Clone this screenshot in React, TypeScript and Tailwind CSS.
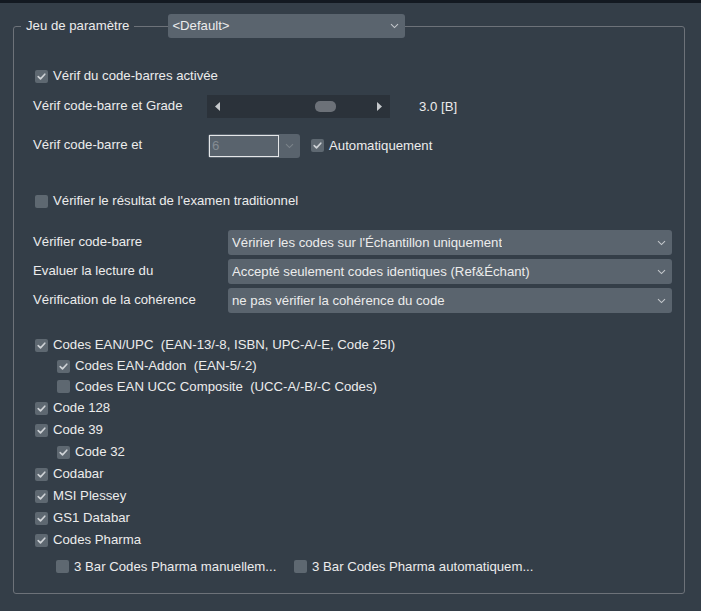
import React from "react";

const font = { fontFamily: '"Liberation Sans", Arial, sans-serif' };

function Check({ checked = false }: { checked?: boolean }) {
  return (
    <span className="flex h-[13px] w-[13px] shrink-0 items-center justify-center rounded-[2px] bg-[#5e6871]">
      {checked && (
        <svg width="9" height="9" viewBox="0 0 9 9" fill="none">
          <path d="M1.2 4.6 L3.5 6.9 L7.8 2.2" stroke="#cfd3d7" strokeWidth="1.6" strokeLinecap="round" strokeLinejoin="round" />
        </svg>
      )}
    </span>
  );
}

function Chevron({ color = "#c3c7cb" }: { color?: string }) {
  return (
    <svg width="9" height="6" viewBox="0 0 9 6" fill="none" className="shrink-0">
      <path d="M1 1.2 L4.5 4.6 L8 1.2" stroke={color} strokeWidth="1.1" />
    </svg>
  );
}

function CheckRow({
  label,
  checked,
  indent = false,
  className = "h-[22px]",
}: {
  label: string;
  checked?: boolean;
  indent?: boolean;
  className?: string;
}) {
  return (
    <div className={`flex items-center gap-[5px] ${indent ? "ml-[24px]" : "ml-[2px]"} ${className}`}>
      <Check checked={checked} />
      <span className="whitespace-pre">{label}</span>
    </div>
  );
}

function Select({ value, className = "" }: { value: string; className?: string }) {
  return (
    <div className={`flex items-center justify-between rounded-[3px] bg-[#5a646e] pl-[4px] pr-[6px] ${className}`}>
      <span className="truncate">{value}</span>
      <Chevron />
    </div>
  );
}

const rows = [
  { label: "Vérifier code-barre", value: "Véririer les codes sur l'Échantillon uniquement" },
  { label: "Evaluer la lecture du", value: "Accepté seulement codes identiques (Ref&Échant)" },
  { label: "Vérification de la cohérence", value: "ne pas vérifier la cohérence du code" },
];

export default function App() {
  return (
    <div className="min-h-screen bg-[#343e48] text-[13.2px] text-[#ececec]" style={font}>
      <div className="h-[3px] bg-[#131921]" />
      <fieldset className="ml-[13px] mt-[11px] w-[672px] rounded-[3px] border border-[#6d7279] pb-[15px] pl-[19px] pr-[12px] pt-[27px]">
        <legend className="-ml-[12px]">
          <div className="flex h-[24px] items-center">
            <span className="px-[5px]">Jeu de paramètre</span>
            <span className="h-px w-[34px] bg-[#6d7279]" />
            <Select value="<Default>" className="h-[24px] w-[237px]" />
          </div>
        </legend>

        <CheckRow label="Vérif du code-barres activée" checked />

        <div className="mt-[8px] flex h-[23px] items-center">
          <span className="w-[174px] -translate-y-[1px]">Vérif code-barre et Grade</span>
          <div className="flex h-[23px] w-[183px] items-center justify-between bg-[#2b323a] px-[8px]">
            <svg width="5" height="9" viewBox="0 0 5 9"><path d="M5 0 L0 4.5 L5 9 Z" fill="#c6c9cc" /></svg>
            <span className="ml-[95px] h-[11px] w-[21px] rounded-[5px] bg-[#6c7178]" />
            <svg width="5" height="9" viewBox="0 0 5 9" className="ml-auto"><path d="M0 0 L5 4.5 L0 9 Z" fill="#c6c9cc" /></svg>
          </div>
          <span className="ml-[29px]">3.0 [B]</span>
        </div>

        <div className="mt-[16px] flex h-[24px] items-center">
          <span className="w-[175px] -translate-y-[1px]">Vérif code-barre et</span>
          <div className="flex h-[24px] w-[92px] items-center rounded-[3px] bg-[#59636d] pl-[1px]">
            <span className="flex h-[22px] w-[70px] items-center border border-[#e4e6e8] pl-[2px] text-[#858c93]">6</span>
            <span className="flex flex-1 justify-center">
              <Chevron color="#7b838a" />
            </span>
          </div>
          <div className="ml-[11px] flex items-center gap-[5px]">
            <Check checked />
            <span>Automatiquement</span>
          </div>
        </div>

        <CheckRow label="Vérifier le résultat de l'examen traditionnel" className="mt-[32px] h-[22px]" />

        <div className="mt-[18px] flex flex-col gap-[4px]">
          {rows.map((r) => (
            <div key={r.label} className="flex h-[25px] items-center">
              <span className="w-[195px] -translate-y-[1px]">{r.label}</span>
              <Select value={r.value} className="h-[25px] flex-1" />
            </div>
          ))}
        </div>

        <div className="mt-[21px] flex flex-col">
          <CheckRow label="Codes EAN/UPC  (EAN-13/-8, ISBN, UPC-A/-E, Code 25I)" checked />
          <CheckRow label="Codes EAN-Addon  (EAN-5/-2)" checked indent className="h-[20px]" />
          <CheckRow label="Codes EAN UCC Composite  (UCC-A/-B/-C Codes)" indent className="h-[21px]" />
          <CheckRow label="Code 128" checked />
          <CheckRow label="Code 39" checked />
          <CheckRow label="Code 32" checked indent />
          <CheckRow label="Codabar" checked />
          <CheckRow label="MSI Plessey" checked />
          <CheckRow label="GS1 Databar" checked />
          <CheckRow label="Codes Pharma" checked />
          <div className="ml-[23px] mt-[5px] flex h-[22px] items-center">
            <div className="flex w-[238px] items-center gap-[5px]">
              <Check />
              <span className="whitespace-nowrap">3 Bar Codes Pharma manuellem...</span>
            </div>
            <div className="flex items-center gap-[5px]">
              <Check />
              <span className="whitespace-nowrap">3 Bar Codes Pharma automatiquem...</span>
            </div>
          </div>
        </div>
      </fieldset>
    </div>
  );
}
